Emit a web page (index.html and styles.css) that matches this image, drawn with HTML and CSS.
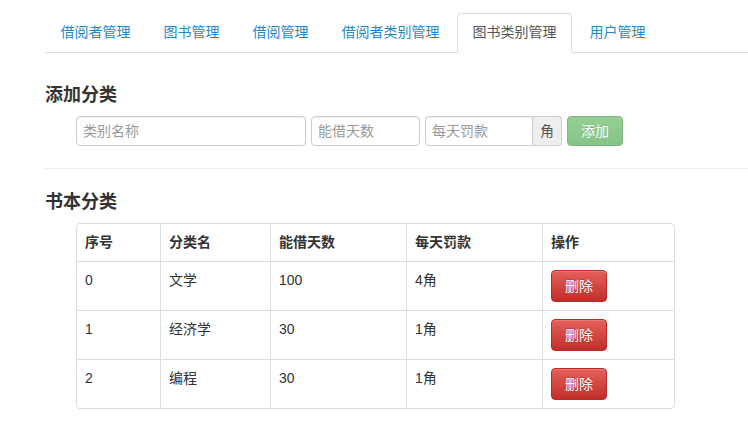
FILE: index.html
```html
<!DOCTYPE html>
<html lang="zh-CN">
<head>
    <meta charset="UTF-8">
    <meta name="viewport" content="width=device-width, initial-scale=1.0">
    <title>图书类别管理</title>
    <link rel="stylesheet" href="styles.css">
</head>
<body>

<div class="container">
    <ul class="nav-tabs">
        <li><a href="#">借阅者管理</a></li>
        <li><a href="#">图书管理</a></li>
        <li><a href="#">借阅管理</a></li>
        <li><a href="#">借阅者类别管理</a></li>
        <li class="active"><a href="#">图书类别管理</a></li>
        <li><a href="#">用户管理</a></li>
    </ul>

    <h4>添加分类</h4>
    <form class="add-form" id="addForm">
        <input type="text" class="form-control name-input" placeholder="类别名称">
        <input type="text" class="form-control days-input" placeholder="能借天数">
        <div class="input-group">
            <input type="text" class="form-control fine-input" placeholder="每天罚款">
            <span class="input-addon">角</span>
        </div>
        <button type="submit" class="btn btn-success" disabled>添加</button>
    </form>

    <hr>

    <h4>书本分类</h4>
    <table class="table">
        <thead>
            <tr>
                <th class="col-id">序号</th>
                <th class="col-name">分类名</th>
                <th class="col-days">能借天数</th>
                <th class="col-fine">每天罚款</th>
                <th>操作</th>
            </tr>
        </thead>
        <tbody>
            <tr>
                <td>0</td>
                <td>文学</td>
                <td>100</td>
                <td>4角</td>
                <td><button class="btn btn-danger">删除</button></td>
            </tr>
            <tr>
                <td>1</td>
                <td>经济学</td>
                <td>30</td>
                <td>1角</td>
                <td><button class="btn btn-danger">删除</button></td>
            </tr>
            <tr>
                <td>2</td>
                <td>编程</td>
                <td>30</td>
                <td>1角</td>
                <td><button class="btn btn-danger">删除</button></td>
            </tr>
        </tbody>
    </table>
</div>

</body>
</html>
```

FILE: styles.css
```css
* {
    box-sizing: border-box;
}
body {
    margin: 0;
    font-family: "Liberation Sans", "Noto Sans CJK SC", sans-serif;
    font-size: 14px;
    line-height: 20px;
    color: #333;
    background-color: #fff;
}
.container {
    padding: 13px 0 0 45px;
}
.nav-tabs {
    display: flex;
    list-style: none;
    margin: 0;
    padding: 0;
    border-bottom: 1px solid #ddd;
}
.nav-tabs li {
    margin: 0 2px -1px 0;
}
.nav-tabs a {
    display: block;
    padding: 8px 14.5px 10px;
    border: 1px solid transparent;
    border-radius: 4px 4px 0 0;
    color: #1f88cb;
    text-decoration: none;
}
.nav-tabs .active a {
    color: #555;
    background-color: #fff;
    border-color: #ddd #ddd transparent;
}
h4 {
    font-size: 18px;
    line-height: 20px;
    font-weight: bold;
    margin: 32px 0 11px;
}
hr {
    margin: 22px 0 0;
    border: 0;
    border-top: 1px solid #eee;
}
hr + h4 {
    margin-top: 23px;
}
.add-form {
    display: flex;
    gap: 5px;
    margin-left: 31px;
}
.form-control {
    height: 30px;
    padding: 0 6px;
    font-family: inherit;
    font-size: 14px;
    color: #555;
    border: 1px solid #ccc;
    border-radius: 4px;
    box-shadow: inset 0 1px 1px rgba(0, 0, 0, 0.075);
}
.form-control::placeholder {
    color: #999;
}
.name-input {
    width: 230px;
}
.days-input {
    width: 109px;
}
.input-group {
    display: flex;
}
.fine-input {
    width: 108px;
    border-radius: 4px 0 0 4px;
}
.input-addon {
    width: 29px;
    height: 30px;
    line-height: 28px;
    text-align: center;
    color: #555;
    background-color: #eee;
    border: 1px solid #ccc;
    border-left: 0;
    border-radius: 0 4px 4px 0;
}
.btn {
    display: inline-block;
    padding: 5px 13px;
    font-family: inherit;
    font-size: 14px;
    line-height: 20px;
    color: #fff;
    border: 1px solid transparent;
    border-radius: 4px;
    cursor: pointer;
}
.btn-success {
    width: 56px;
    height: 30px;
    padding: 0;
    line-height: 28px;
    background-image: linear-gradient(#5cb85c, #47a447);
    border-color: #3e8f3e;
    text-shadow: 0 -1px 0 rgba(0, 0, 0, 0.2);
}
.btn-success:disabled {
    opacity: 0.65;
    cursor: not-allowed;
}
.btn-danger {
    background-image: linear-gradient(#e5605b, #c12e2a);
    border-color: #b92c28;
    text-shadow: 0 -1px 0 rgba(0, 0, 0, 0.2);
    box-shadow: inset 0 1px 0 rgba(255, 255, 255, 0.15);
}
.table {
    width: 599px;
    margin-left: 31px;
    border: 1px solid #ddd;
    border-radius: 4px;
    border-collapse: separate;
    border-spacing: 0;
}
.table th,
.table td {
    padding: 8px;
    text-align: left;
    vertical-align: top;
    border-left: 1px solid #ddd;
    border-top: 1px solid #ddd;
}
.table th:first-child,
.table td:first-child {
    border-left: 0;
}
.table thead th {
    border-top: 0;
    padding-bottom: 9px;
    border-bottom: 1px solid #ddd;
}
.table tbody tr:first-child td {
    border-top: 0;
}
.col-id {
    width: 83px;
}
.col-name {
    width: 110px;
}
.col-days {
    width: 136px;
}
.col-fine {
    width: 136px;
}
```
